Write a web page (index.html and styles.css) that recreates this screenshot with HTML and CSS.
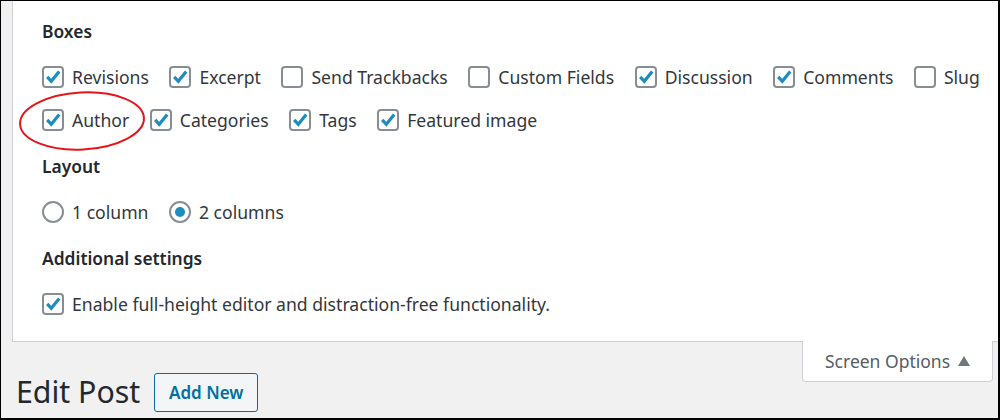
FILE: index.html
```html
<!DOCTYPE html>
<html>
<head>
<meta charset="utf-8">
<link rel="stylesheet" href="styles.css">
</head>
<body>
<div class="frame">
  <div class="panel">
    <section class="group">
      <h5 class="group-title">Boxes</h5>
      <div class="row">
        <label class="opt"><span class="cb on"><svg viewBox="0 0 22 22"><path d="M5.2 10.8 L9.3 15.3 L17.2 5.4"/></svg></span>Revisions</label>
        <label class="opt"><span class="cb on"><svg viewBox="0 0 22 22"><path d="M5.2 10.8 L9.3 15.3 L17.2 5.4"/></svg></span>Excerpt</label>
        <label class="opt"><span class="cb"></span>Send Trackbacks</label>
        <label class="opt"><span class="cb"></span>Custom Fields</label>
        <label class="opt"><span class="cb on"><svg viewBox="0 0 22 22"><path d="M5.2 10.8 L9.3 15.3 L17.2 5.4"/></svg></span>Discussion</label>
        <label class="opt"><span class="cb on"><svg viewBox="0 0 22 22"><path d="M5.2 10.8 L9.3 15.3 L17.2 5.4"/></svg></span>Comments</label>
        <label class="opt"><span class="cb"></span>Slug</label>
      </div>
      <div class="row">
        <label class="opt"><span class="cb on"><svg viewBox="0 0 22 22"><path d="M5.2 10.8 L9.3 15.3 L17.2 5.4"/></svg></span>Author</label>
        <label class="opt"><span class="cb on"><svg viewBox="0 0 22 22"><path d="M5.2 10.8 L9.3 15.3 L17.2 5.4"/></svg></span>Categories</label>
        <label class="opt"><span class="cb on"><svg viewBox="0 0 22 22"><path d="M5.2 10.8 L9.3 15.3 L17.2 5.4"/></svg></span>Tags</label>
        <label class="opt"><span class="cb on"><svg viewBox="0 0 22 22"><path d="M5.2 10.8 L9.3 15.3 L17.2 5.4"/></svg></span>Featured image</label>
      </div>
    </section>
    <section class="group">
      <h5 class="group-title">Layout</h5>
      <div class="row">
        <label class="opt"><span class="rd"></span>1 column</label>
        <label class="opt"><span class="rd on"></span>2 columns</label>
      </div>
    </section>
    <section class="group">
      <h5 class="group-title">Additional settings</h5>
      <div class="row">
        <label class="opt"><span class="cb on"><svg viewBox="0 0 22 22"><path d="M5.2 10.8 L9.3 15.3 L17.2 5.4"/></svg></span>Enable full-height editor and distraction-free functionality.</label>
      </div>
    </section>
  </div>
  <div class="tab">Screen Options <span class="tri"></span></div>
  <div class="heading">
    <h1 class="title">Edit Post</h1>
    <span class="btn">Add New</span>
  </div>
  <svg class="circle" viewBox="0 0 130 62"><ellipse cx="65" cy="31" rx="62" ry="28.5" transform="rotate(-3 65 31)"/></svg>
</div>
</body>
</html>
```
FILE: styles.css
```css
* { box-sizing: border-box; }
html, body { margin: 0; padding: 0; }
body {
  font-family: "Noto Sans", "Open Sans", sans-serif;
  color: #32373c;
}
.frame {
  position: relative;
  width: 1000px;
  height: 420px;
  overflow: hidden;
  background: #f1f1f1;
  border: 1px solid #000;
  border-right-width: 2px;
  border-bottom-width: 2px;
}
.panel {
  margin-left: 11px;
  background: #fff;
  border-left: 1px solid #ccd0d4;
  border-bottom: 1px solid #ccd0d4;
  padding: 18px 0 16px 29px;
}
.group + .group { margin-top: 13px; }
.group-title {
  margin: 0 0 12px;
  height: 24px;
  line-height: 24px;
  font-size: 17.4px;
  font-weight: 600;
  color: #23282d;
}
.row {
  display: flex;
  align-items: center;
  height: 43px;
}
.opt {
  display: flex;
  align-items: center;
  gap: 8px;
  margin-right: 20.5px;
  font-size: 17.6px;
  white-space: nowrap;
}
.cb {
  width: 22px;
  height: 22px;
  border: 2px solid #868d94;
  border-radius: 4px;
  background: #fff;
  position: relative;
  flex: none;
}
.cb svg {
  position: absolute;
  left: -2px;
  top: -2px;
  width: 22px;
  height: 22px;
}
.cb svg path {
  fill: none;
  stroke: #1e8cbe;
  stroke-width: 3.2;
  stroke-linejoin: miter;
}
.rd {
  width: 22px;
  height: 22px;
  border: 2px solid #868d94;
  border-radius: 50%;
  display: flex;
  align-items: center;
  justify-content: center;
  flex: none;
}
.rd.on::after {
  content: "";
  width: 10px;
  height: 10px;
  border-radius: 50%;
  background: #1e8cbe;
}
.tab {
  float: right;
  margin-right: 5px;
  width: 191px;
  height: 41px;
  background: #fff;
  border: 1px solid #ccd0d4;
  border-top: none;
  border-radius: 0 0 4px 4px;
  margin-top: -1px;
  padding-left: 22px;
  display: flex;
  align-items: center;
  font-size: 17.5px;
  color: #555d66;
}
.tri {
  margin-left: 8px;
  width: 0;
  height: 0;
  border-left: 6px solid transparent;
  border-right: 6px solid transparent;
  border-bottom: 10px solid #72777c;
}
.heading {
  display: flex;
  align-items: center;
  gap: 14px;
  padding: 30px 0 0 15px;
}
.title {
  margin: 0;
  font-size: 30.3px;
  font-weight: 400;
  line-height: 40px;
  color: #23282d;
}
.btn {
  display: flex;
  align-items: center;
  justify-content: center;
  width: 104px;
  height: 39px;
  border: 1px solid #0071a1;
  border-radius: 3px;
  background: #f3f5f6;
  color: #0071a1;
  font-size: 17px;
  font-weight: 600;
}
.circle {
  position: absolute;
  left: 16px;
  top: 89px;
  width: 130px;
  height: 62px;
  overflow: visible;
}
.circle ellipse {
  fill: none;
  stroke: #e5141b;
  stroke-width: 2;
}
```
